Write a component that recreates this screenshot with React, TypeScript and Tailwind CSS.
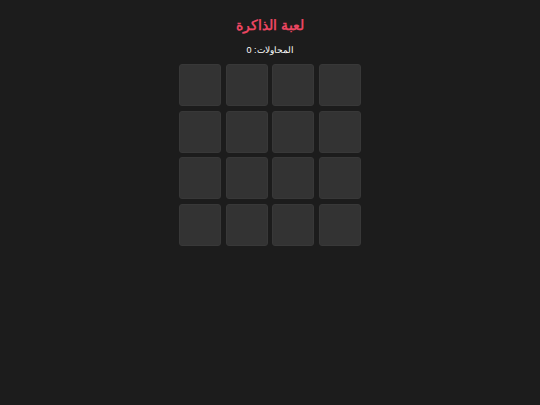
export default function App() {
  const cards = Array.from({ length: 16 }, (_, i) => i);
  return (
    <div
      dir="rtl"
      className="min-h-screen bg-[#1c1c1c] flex flex-col items-center pt-[15px]"
      style={{ fontFamily: '"Liberation Sans", Arial, sans-serif' }}
    >
      <h1 className="text-[14px] leading-[20px] font-bold text-[#e94560]">لعبة الذاكرة</h1>
      <p className="mt-[9px] text-[9px] leading-[12px] text-white">المحاولات: 0</p>
      <div className="mt-[8px] grid grid-cols-[repeat(4,42px)] gap-[4.5px]" dir="ltr">
        {cards.map((c) => (
          <div key={c} className="h-[42px] w-[42px] rounded-[3px] bg-[#333333] border border-[#383838]" />
        ))}
      </div>
    </div>
  );
}
